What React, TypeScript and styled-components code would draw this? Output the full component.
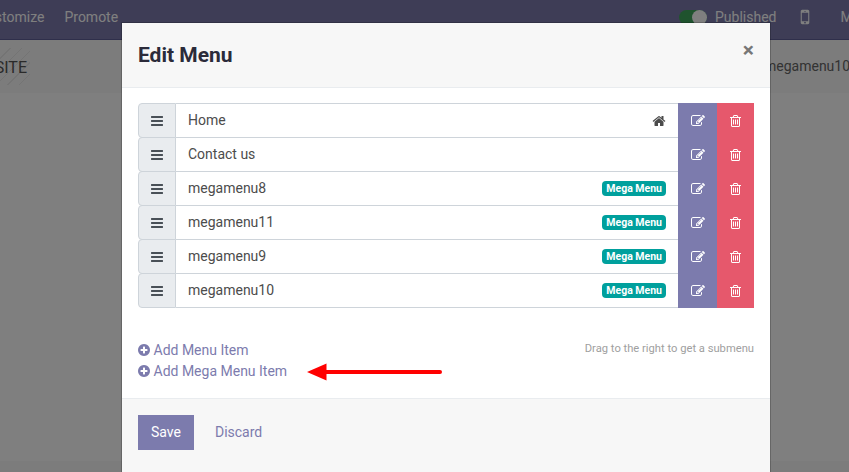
import React from 'react';
import styled, { createGlobalStyle } from 'styled-components';

const GlobalStyle = createGlobalStyle`
  *, *::before, *::after { box-sizing: border-box; }
  html, body { margin: 0; height: 100%; overflow: hidden; }
  body { font: 14px/21px Roboto, "Liberation Sans", sans-serif; color: #4c4c4c; background: #fff; }
  button { font: inherit; border: 0; padding: 0; background: none; }
`;

const icons = {
  bars: 'M1664 1344v128q0 26-19 45t-45 19h-1408q-26 0-45-19t-19-45v-128q0-26 19-45t45-19h1408q26 0 45 19t19 45zm0-512v128q0 26-19 45t-45 19h-1408q-26 0-45-19t-19-45v-128q0-26 19-45t45-19h1408q26 0 45 19t19 45zm0-512v128q0 26-19 45t-45 19h-1408q-26 0-45-19t-19-45v-128q0-26 19-45t45-19h1408q26 0 45 19t19 45z',
  home: 'M1472 992v480q0 26-19 45t-45 19h-384v-384h-256v384h-384q-26 0-45-19t-19-45v-480q0-1 .5-3t.5-3l575-474 575 474q1 2 1 6zm223-69l-62 74q-8 9-21 11h-3q-13 0-21-7l-692-577-692 577q-12 8-24 7-13-2-21-11l-62-74q-8-10-7-23.5t11-21.5l719-599q32-26 76-26t76 26l244 204v-195q0-14 9-23t23-9h192q14 0 23 9t9 23v408l219 182q10 8 11 21.5t-7 23.5z',
  edit: 'M888 1184l116-116-152-152-116 116v56h96v96h56zm440-720q-16-16-33 1l-350 350q-17 17-1 33t33-1l350-350q17-17 1-33zm80 594v190q0 119-84.5 203.5t-203.5 84.5h-832q-119 0-203.5-84.5t-84.5-203.5v-832q0-119 84.5-203.5t203.5-84.5h832q63 0 117 25 15 7 18 23 3 17-9 29l-49 49q-14 14-32 8-23-6-45-6h-832q-66 0-113 47t-47 113v832q0 66 47 113t113 47h832q66 0 113-47t47-113v-126q0-13 9-22l64-64q15-15 35-7t20 29zm-96-738l288 288-672 672h-288v-288zm444 132l-92 92-288-288 92-92q28-28 68-28t68 28l152 152q28 28 28 68t-28 68z',
  trash: 'M704 736v576q0 14-9 23t-23 9h-64q-14 0-23-9t-9-23v-576q0-14 9-23t23-9h64q14 0 23 9t9 23zm256 0v576q0 14-9 23t-23 9h-64q-14 0-23-9t-9-23v-576q0-14 9-23t23-9h64q14 0 23 9t9 23zm256 0v576q0 14-9 23t-23 9h-64q-14 0-23-9t-9-23v-576q0-14 9-23t23-9h64q14 0 23 9t9 23zm128 724v-948h-896v948q0 22 7 40.5t14.5 27 10.5 8.5h832q3 0 10.5-8.5t14.5-27 7-40.5zm-672-1076h448l-48-117q-7-9-17-11h-317q-10 2-17 11zm928 32v64q0 14-9 23t-23 9h-96v948q0 83-47 143.5t-113 60.5h-832q-66 0-113-58.5t-47-141.5v-952h-96q-14 0-23-9t-9-23v-64q0-14 9-23t23-9h309l70-167q15-37 54-63t79-26h320q40 0 79 26t54 63l70 167h309q14 0 23 9t9 23z',
  plus: 'M1344 960v-128q0-26-19-45t-45-19h-256v-256q0-26-19-45t-45-19h-128q-26 0-45 19t-19 45v256h-256q-26 0-45 19t-19 45v128q0 26 19 45t45 19h256v256q0 26 19 45t45 19h128q26 0 45-19t19-45v-256h256q26 0 45-19t19-45zm320-64q0 209-103 385.5t-279.5 279.5-385.5 103-385.5-103-279.5-279.5-103-385.5 103-385.5 279.5-279.5 385.5-103 385.5 103 279.5 279.5 103 385.5z',
  mobile: 'M976 1408q0-33-23.5-56.5t-56.5-23.5-56.5 23.5-23.5 56.5 23.5 56.5 56.5 23.5 56.5-23.5 23.5-56.5zm208-160v-704q0-13-9.5-22.5t-22.5-9.5h-512q-13 0-22.5 9.5t-9.5 22.5v704q0 13 9.5 22.5t22.5 9.5h512q13 0 22.5-9.5t9.5-22.5zm-192-848q0-16-16-16h-160q-16 0-16 16t16 16h160q16 0 16-16zm288-16v1024q0 52-38 90t-90 38h-512q-52 0-90-38t-38-90v-1024q0-52 38-90t90-38h512q52 0 90 38t38 90z',
};

const IconSvg = styled.svg`
  display: block;
  flex: none;
  fill: currentColor;
`;

/* The trash glyph is an odd number of pixels wide, so its box starts half a pixel in. */
const Icon = ({ name, size = 14 }: { name: keyof typeof icons; size?: number }) => (
  <IconSvg width={size} height={size} viewBox={`${name === 'trash' ? 64 : 0} 0 1792 1792`}>
    <path d={icons[name]} />
  </IconSvg>
);

const Page = styled.div`
  display: flex;
  flex-direction: column;
  height: 472px;
  overflow: hidden;
  white-space: nowrap;
`;
const Navbar = styled.nav`
  flex: none;
  display: flex;
  justify-content: space-between;
  height: 40px;
  padding-bottom: 5px;
  align-items: center;
  color: #fff;
  background: #7c7bad;
  border-bottom: 1px solid #5f5e97;
`;
const NavLeft = styled.div`
  display: flex;
  gap: 20px;
  margin-left: -22px;
`;
const NavRight = styled.div`
  display: flex;
  align-items: center;
  width: 170px;
`;
const Switch = styled.span`
  flex: none;
  display: flex;
  justify-content: flex-end;
  width: 28px;
  height: 15px;
  margin-right: 8px;
  border-radius: 8px;
  background: #3fa75c;
`;
const Knob = styled.span`
  width: 15px;
  height: 15px;
  border-radius: 50%;
  background: #fff;
`;
const Device = styled.span`
  margin: 0 25px 0 19px;
`;
const SiteHeader = styled.header`
  flex: none;
  display: flex;
  justify-content: space-between;
  height: 53px;
  background: #f8f8f8;
`;
const Logo = styled.div`
  width: 30px;
  height: 37px;
  margin-top: 8px;
  display: flex;
  align-items: center;
  justify-content: flex-end;
  padding: 1px 3px 0 0;
  font-size: 16px;
  color: #555;
  background: repeating-linear-gradient(135deg, transparent 0 7px, #e8e8e8 7px 8px);
`;
const SiteLink = styled.span`
  width: 85px;
  padding-top: 16px;
  color: #666;
`;
const SiteBody = styled.main`
  flex: 1;
`;
const SiteFooter = styled.footer`
  height: 11px;
  background: #f8f8f8;
`;

const Backdrop = styled.div`
  position: fixed;
  inset: 0;
  display: flex;
  align-items: flex-start;
  padding: 22px 0 0 121px;
  background: rgba(0, 0, 0, 0.5);
  overflow: hidden;
`;
const Dialog = styled.section`
  flex: none;
  width: 650px;
  height: 480px;
  background: #fff;
  background-clip: padding-box;
  border: 1px solid rgba(0, 0, 0, 0.2);
  white-space: nowrap;
`;
const ModalHeader = styled.header`
  display: flex;
  justify-content: space-between;
  height: 65px;
  padding: 16px;
  background: #f7f7f7;
  border-bottom: 1px solid #e9ecef;
`;
const Title = styled.h4`
  margin: 0;
  font-size: 21px;
  line-height: 32px;
  font-weight: 700;
  color: #2b2b3a;
`;
const Close = styled.button`
  height: 23px;
  font-size: 21px;
  line-height: 23px;
  font-weight: 700;
  color: #777;
`;
const ModalBody = styled.div`
  height: 310px;
  padding: 15px 16px 0;
`;
const List = styled.ul`
  list-style: none;
  margin: 0;
  padding: 0 0 1px;
`;
const Row = styled.li`
  display: flex;
  height: 35px;
  margin-bottom: -1px;
`;
const Handle = styled.span`
  display: flex;
  align-items: center;
  justify-content: center;
  width: 38px;
  padding-top: 1px;
  color: #495057;
  background: #e9ecef;
  border: 1px solid #ced4da;
  border-radius: 4px 0 0 4px;
`;
const Field = styled.div`
  flex: 1;
  display: flex;
  align-items: center;
  justify-content: space-between;
  padding: 0 12px;
  border: solid #ced4da;
  border-width: 1px 0;
`;
const HomeMark = styled.span`
  padding-top: 1px;
`;
const Badge = styled.span`
  height: 15px;
  padding: 0 4px;
  border-radius: 4px;
  font-size: 10.5px;
  line-height: 15px;
  font-weight: 700;
  color: #fff;
  background: #00a09d;
`;
const Action = styled.button<{ $danger?: boolean }>`
  display: flex;
  align-items: center;
  justify-content: center;
  width: ${p => (p.$danger ? 37 : 39)}px;
  padding: 1px 0 0 ${p => (p.$danger ? 1 : 0)}px;
  color: #fff;
  background: ${p => (p.$danger ? '#e6586c' : '#7c7bad')};
`;
const Below = styled.div`
  display: flex;
  justify-content: space-between;
  margin-top: 32px;
`;
const AddLink = styled.a`
  display: flex;
  align-items: flex-start;
  gap: 2.5px;
  height: 21px;
  margin-left: -1px;
  color: #7c7bad;

  ${IconSvg} {
    margin-top: 3px;
  }
`;
const AddRow = styled.div`
  display: flex;
  align-items: flex-start;
  gap: 20px;
`;
const Hint = styled.small`
  font-size: 11.2px;
  line-height: 17px;
  color: #a0a0a0;
`;
const ArrowSvg = styled.svg`
  display: block;
  margin-top: 2px;
`;
const ModalFooter = styled.footer`
  display: flex;
  height: 90px;
  padding: 16px;
  background: #f7f7f7;
  border-top: 1px solid #e9ecef;
`;
const Button = styled.button<{ $primary?: boolean }>`
  height: 35px;
  padding: 0 13px;
  margin-right: 8px;
  color: ${p => (p.$primary ? '#fff' : '#7c7bad')};
  background: ${p => (p.$primary ? '#7c7bad' : 'transparent')};
`;

const items = [
  { name: 'Home', home: true },
  { name: 'Contact us' },
  { name: 'megamenu8', mega: true },
  { name: 'megamenu11', mega: true },
  { name: 'megamenu9', mega: true },
  { name: 'megamenu10', mega: true },
];

export default function App() {
  return (
    <>
      <GlobalStyle />
      <Page>
        <Navbar>
          <NavLeft><span>Customize</span><span>Promote</span></NavLeft>
          <NavRight>
            <Switch><Knob /></Switch>
            <span>Published</span>
            <Device><Icon name="mobile" size={20} /></Device>
            <span>My</span>
          </NavRight>
        </Navbar>
        <SiteHeader>
          <Logo>WEBSITE</Logo>
          <SiteLink>megamenu10</SiteLink>
        </SiteHeader>
        <SiteBody />
        <SiteFooter />
      </Page>
      <Backdrop>
        <Dialog>
          <ModalHeader><Title>Edit Menu</Title><Close>×</Close></ModalHeader>
          <ModalBody>
            <List>
              {items.map(item => (
                <Row key={item.name}>
                  <Handle><Icon name="bars" /></Handle>
                  <Field>
                    <span>{item.name}</span>
                    {item.home && <HomeMark><Icon name="home" /></HomeMark>}
                    {item.mega && <Badge>Mega Menu</Badge>}
                  </Field>
                  <Action><Icon name="edit" /></Action>
                  <Action $danger><Icon name="trash" /></Action>
                </Row>
              ))}
            </List>
            <Below>
              <div>
                <AddLink><Icon name="plus" />Add Menu Item</AddLink>
                <AddRow>
                  <AddLink><Icon name="plus" />Add Mega Menu Item</AddLink>
                  <ArrowSvg width="135" height="18" viewBox="0 0 135 18">
                    <path d="M0 9 19.5 .5v17z" fill="#f00" />
                    <path d="M18 9h115" stroke="#f00" strokeWidth="4" strokeLinecap="round" />
                  </ArrowSvg>
                </AddRow>
              </div>
              <Hint>Drag to the right to get a submenu</Hint>
            </Below>
          </ModalBody>
          <ModalFooter><Button $primary>Save</Button><Button>Discard</Button></ModalFooter>
        </Dialog>
      </Backdrop>
    </>
  );
}
